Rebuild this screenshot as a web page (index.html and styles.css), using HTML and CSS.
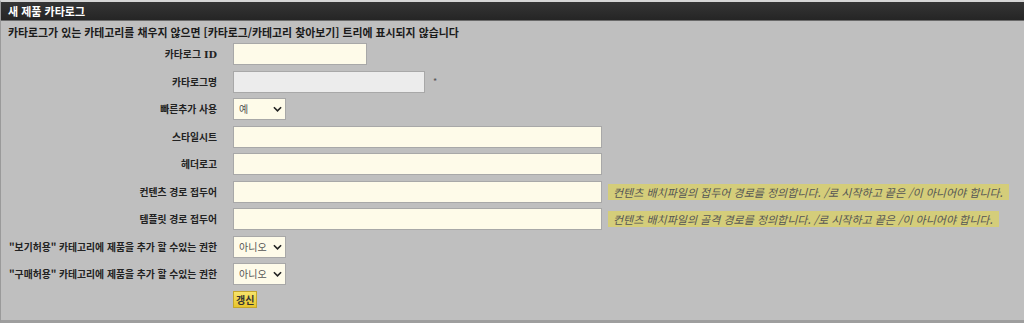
FILE: index.html
```html
<!DOCTYPE html>
<html lang="ko">
<head>
  <meta charset="UTF-8">
  <meta name="viewport" content="width=device-width, initial-scale=1.0">
  <title>새 제품 카타로그</title>
  <link rel="stylesheet" href="styles.css">
</head>
<body>

  <div class="panel">
    <div class="panel-title">새 제품 카타로그</div>

    <div class="panel-body">
      <p class="notice">카타로그가 있는 카테고리를 채우지 않으면 [카타로그/카테고리 찾아보기] 트리에 표시되지 않습니다</p>

      <form class="form-grid">
        <label class="label">카타로그 <span class="latin">ID</span></label>
        <div class="field"><input type="text" class="input input-short"></div>

        <label class="label">카타로그명</label>
        <div class="field">
          <input type="text" class="input input-mid input-disabled">
          <span class="required">*</span>
        </div>

        <label class="label">빠른추가 사용</label>
        <div class="field">
          <div class="select-wrap">
            <select class="select"><option>예</option><option>아니오</option></select>
            <svg class="chevron" viewBox="0 0 10 6" width="9" height="6"><path d="M1 1l4 4 4-4" fill="none" stroke="#222" stroke-width="1.8"/></svg>
          </div>
        </div>

        <label class="label">스타일시트</label>
        <div class="field"><input type="text" class="input input-long"></div>

        <label class="label">헤더로고</label>
        <div class="field"><input type="text" class="input input-long"></div>

        <label class="label">컨텐츠 경로 접두어</label>
        <div class="field">
          <input type="text" class="input input-long">
          <span class="hint">컨텐츠 배치파일의 접두어 경로를 정의합니다. /로 시작하고 끝은 /이 아니어야 합니다.</span>
        </div>

        <label class="label">템플릿 경로 접두어</label>
        <div class="field">
          <input type="text" class="input input-long">
          <span class="hint">컨텐츠 배치파일의 골격 경로를 정의합니다. /로 시작하고 끝은 /이 아니어야 합니다.</span>
        </div>

        <label class="label">"보기허용" 카테고리에 제품을 추가 할 수있는 권한</label>
        <div class="field">
          <div class="select-wrap">
            <select class="select"><option>아니오</option><option>예</option></select>
            <svg class="chevron" viewBox="0 0 10 6" width="9" height="6"><path d="M1 1l4 4 4-4" fill="none" stroke="#222" stroke-width="1.8"/></svg>
          </div>
        </div>

        <label class="label">"구매허용" 카테고리에 제품을 추가 할 수있는 권한</label>
        <div class="field">
          <div class="select-wrap">
            <select class="select"><option>아니오</option><option>예</option></select>
            <svg class="chevron" viewBox="0 0 10 6" width="9" height="6"><path d="M1 1l4 4 4-4" fill="none" stroke="#222" stroke-width="1.8"/></svg>
          </div>
        </div>

        <span></span>
        <div class="field field-button">
          <button type="button" class="btn-update">갱신</button>
        </div>
      </form>
    </div>
  </div>

</body>
</html>
```

FILE: styles.css
```css
/* Page */
body {
  margin: 0;
  padding: 0;
  background-color: #bfbfbf;
  font-family: 'Noto Sans CJK KR', 'DejaVu Sans', sans-serif;
  color: #222;
}

.panel {
  height: 323px;
  box-sizing: border-box;
  border-left: 1px solid #9a9a9a;
  border-bottom: 3px solid #9e9e9e;
  border-top: 2px solid #d6d6d6;
  background-color: #bfbfbf;
}

.panel-title {
  height: 18px;
  line-height: 18px;
  padding-left: 7px;
  background: linear-gradient(#353535, #252525);
  border-bottom: 1px solid #6a6a6a;
  color: #ffffff;
  font-size: 11px;
  font-weight: 700;
}

.panel-body {
  padding: 0 7px;
}

.notice {
  margin: 4px 0 4px;
  font-size: 10.9px;
  font-weight: 700;
  line-height: 14px;
  color: #1a1a1a;
}

/* Form layout */
.form-grid {
  display: grid;
  grid-template-columns: 209px 1fr;
  grid-auto-rows: 22px;
  column-gap: 16px;
  row-gap: 5.5px;
  margin: 0;
}

.label {
  display: flex;
  align-items: center;
  justify-content: flex-end;
  font-size: 9.8px;
  font-weight: 700;
  color: #222;
  white-space: nowrap;
}

.label .latin {
  font-family: 'DejaVu Serif', serif;
  margin-left: 3px;
}

.field {
  display: flex;
  align-items: center;
  gap: 6px;
}

.input {
  box-sizing: border-box;
  height: 22px;
  border: 1px solid #a8a8a8;
  background-color: #fefbe9;
  padding: 0 4px;
  font-size: 11px;
}

.input-short { width: 134px; }
.input-mid { width: 192px; }
.input-long { width: 369px; }

.input-disabled {
  background-color: #ececec;
}

.required {
  font-size: 9px;
  color: #555;
  margin-left: 2px;
}

/* Select with drawn chevron */
.select-wrap {
  position: relative;
  width: 53px;
  height: 22px;
}

.select {
  appearance: none;
  -webkit-appearance: none;
  display: block;
  box-sizing: border-box;
  width: 53px;
  height: 22px;
  border: 1px solid #a8a8a8;
  border-radius: 0;
  background-color: #fefbe9;
  font-family: 'Noto Sans CJK KR', sans-serif;
  font-size: 10px;
  line-height: 20px;
  color: #555;
  padding: 0 14px 0 5px;
  margin: 0;
}

.chevron {
  position: absolute;
  right: 4px;
  top: 8px;
  pointer-events: none;
}

.hint {
  background-color: #d4cd7a;
  color: #555;
  font-style: italic;
  font-size: 11px;
  line-height: 16px;
  padding: 0 6px 0 5px;
  white-space: nowrap;
}

.field-button {
  align-items: flex-start;
}

.btn-update {
  height: 17px;
  padding: 0 2px;
  border: 1px solid #c4a62c;
  background: linear-gradient(#f7e46a, #e7c52c);
  font-family: 'Noto Sans CJK KR', sans-serif;
  font-size: 10px;
  font-weight: 700;
  line-height: 15px;
  color: #333;
  cursor: pointer;
}
```
